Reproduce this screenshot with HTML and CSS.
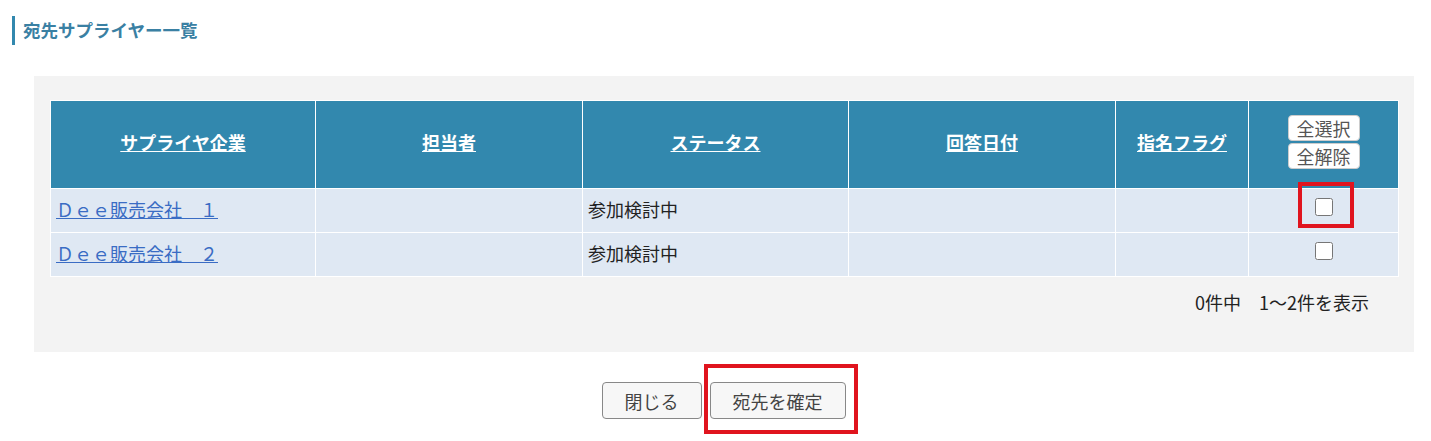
FILE: index.html
```html
<!DOCTYPE html>
<html lang="ja">
<head>
    <meta charset="UTF-8">
    <meta name="viewport" content="width=device-width, initial-scale=1.0">
    <title>宛先サプライヤー一覧</title>
    <link rel="stylesheet" href="styles.css">
</head>
<body>
    <h1 class="page-title">宛先サプライヤー一覧</h1>

    <div class="panel">
        <table class="supplier-table">
            <colgroup>
                <col class="col-company">
                <col class="col-person">
                <col class="col-status">
                <col class="col-date">
                <col class="col-flag">
                <col class="col-check">
            </colgroup>
            <thead>
                <tr>
                    <th><a href="#">サプライヤ企業</a></th>
                    <th><a href="#">担当者</a></th>
                    <th><a href="#">ステータス</a></th>
                    <th><a href="#">回答日付</a></th>
                    <th><a href="#">指名フラグ</a></th>
                    <th>
                        <div class="select-btns">
                            <button class="small-btn">全選択</button>
                            <button class="small-btn">全解除</button>
                        </div>
                    </th>
                </tr>
            </thead>
            <tbody>
                <tr>
                    <td><a href="#">Ｄｅｅ販売会社　１</a></td>
                    <td></td>
                    <td>参加検討中</td>
                    <td></td>
                    <td></td>
                    <td class="check-cell">
                        <span class="mark mark-check"></span>
                        <input type="checkbox">
                    </td>
                </tr>
                <tr>
                    <td><a href="#">Ｄｅｅ販売会社　２</a></td>
                    <td></td>
                    <td>参加検討中</td>
                    <td></td>
                    <td></td>
                    <td class="check-cell"><input type="checkbox"></td>
                </tr>
            </tbody>
        </table>
        <p class="count">0件中　1～2件を表示</p>
    </div>

    <div class="actions">
        <button class="btn">閉じる</button>
        <div class="confirm-wrap">
            <span class="mark mark-confirm"></span>
            <button class="btn">宛先を確定</button>
        </div>
    </div>
</body>
</html>
```

FILE: styles.css
```css
html, body {
    min-height: 441px;
}
body {
    margin: 0;
    font-family: "Noto Sans CJK JP", "Noto Sans", sans-serif;
    font-size: 18px;
    color: #222;
    background: #fff;
}
.page-title {
    margin: 16px 0 0 12px;
    padding: 0 0 0 8px;
    border-left: 3px solid #3288ae;
    height: 29px;
    line-height: 28px;
    font-size: 17.5px;
    font-weight: bold;
    color: #3a80a3;
}
.panel {
    margin: 31px 17px 0 34px;
    padding: 24px 16px 0 16px;
    background: #f3f3f3;
    height: 252px;
}
.supplier-table {
    width: 100%;
    border-collapse: collapse;
    table-layout: fixed;
}
.col-company { width: 265px; }
.col-person { width: 267px; }
.col-status { width: 266px; }
.col-date { width: 267px; }
.col-flag { width: 133px; }
.col-check { width: 150px; }
.supplier-table th,
.supplier-table td {
    border: 1px solid #fff;
}
.supplier-table th {
    height: 82px;
    background: #3288ae;
    color: #fff;
    font-size: 18px;
    font-weight: bold;
    text-align: center;
    padding: 0 0 5px 0;
}
.supplier-table th a {
    color: #fff;
}
.supplier-table td {
    height: 40px;
    background: #dfe8f3;
    padding: 0 5px 3px 5px;
}
.supplier-table td a {
    color: #3a6cc4;
}
.select-btns {
    display: flex;
    flex-direction: column;
    align-items: center;
    gap: 2px;
}
.small-btn {
    font-family: inherit;
    font-size: 18px;
    color: #555;
    background: #fff;
    border: 1px solid #ccc;
    border-radius: 4px;
    padding: 0 8px;
    height: 26px;
    line-height: 24px;
}
.supplier-table .check-cell {
    position: relative;
    text-align: center;
    vertical-align: top;
    height: 34px;
    padding: 9px 5px 0 5px;
}
.check-cell input {
    display: block;
    width: 18px;
    height: 18px;
    margin: 0 auto;
}
.mark {
    position: absolute;
    border: 4px solid #e0141e;
}
.mark-check {
    left: 49px;
    top: -7px;
    width: 48px;
    height: 38px;
}
.count {
    margin: 12px 29px 0 0;
    text-align: right;
    color: #222;
}
.actions {
    display: flex;
    justify-content: center;
    align-items: flex-start;
    gap: 8px;
    margin-top: 30px;
    padding-left: 16px;
    padding-bottom: 22px;
}
.confirm-wrap {
    position: relative;
    display: flex;
}
.mark-confirm {
    left: -6px;
    top: -18px;
    width: 146px;
    height: 62px;
}
.btn {
    font-family: inherit;
    font-size: 18px;
    color: #444;
    background: #f7f7f7;
    border: 1px solid #888;
    border-radius: 4px;
    height: 37px;
    padding: 0 22px;
}
```
